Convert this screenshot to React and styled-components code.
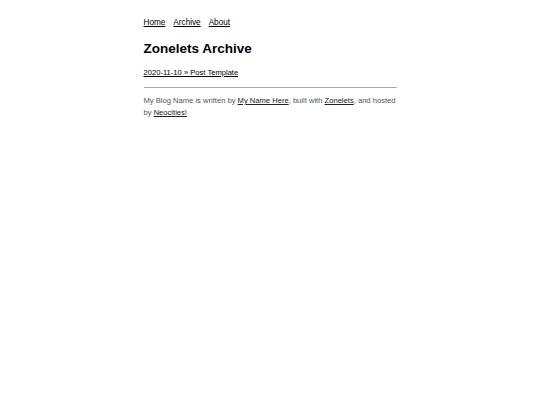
import styled, { createGlobalStyle } from "styled-components";

const GlobalStyle = createGlobalStyle`
  body {
    margin: 0;
    background: #fff;
    font-family: "Liberation Sans", Arial, sans-serif;
    color: #000;
  }
`;

const Page = styled.div`
  width: 253px;
  margin: 0 auto;
  padding-top: 18px;
`;

const Nav = styled.nav`
  display: flex;
  gap: 8px;
  font-size: 8.2px;
  line-height: 10px;
`;

const Link = styled.a`
  color: ${(p) => (p.$dark ? "#222" : "#000")};
  text-decoration: underline;
`;

const Title = styled.h1`
  margin: 13px 0 0;
  font-size: 13.5px;
  line-height: 16px;
  font-weight: bold;
`;

const PostList = styled.div`
  margin-top: 11px;
  font-size: 7.6px;
  line-height: 10px;
`;

const Rule = styled.hr`
  margin: 9px 0 0;
  border: 0;
  border-top: 1px solid #aaa;
`;

const Footer = styled.p`
  margin: 7px 0 0;
  font-size: 7.6px;
  line-height: 12px;
  color: #555;
`;

export default function App() {
  return (
    <>
      <GlobalStyle />
      <Page>
        <Nav>
          <Link href="#">Home</Link>
          <Link href="#">Archive</Link>
          <Link href="#">About</Link>
        </Nav>
        <Title>Zonelets Archive</Title>
        <PostList>
          <Link href="#">2020-11-10 » Post Template</Link>
        </PostList>
        <Rule />
        <Footer>
          My Blog Name is written by <Link $dark href="#">My Name Here</Link>, built with{" "}
          <Link $dark href="#">Zonelets</Link>, and hosted by <Link $dark href="#">Neocities!</Link>
        </Footer>
      </Page>
    </>
  );
}
